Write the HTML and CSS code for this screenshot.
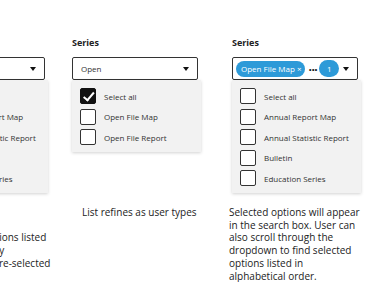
FILE: index.html
```html
<!DOCTYPE html>
<html lang="en">
<head>
    <meta charset="UTF-8">
    <title>Series filter states</title>
    <link rel="stylesheet" href="styles.css">
</head>
<body>
    <div class="board">
        <div class="col col_first">
            <div class="field">
                <div class="label">Series</div>
                <div class="select">
                    <span class="value"></span>
                    <span class="caret"></span>
                </div>
                <div class="menu">
                    <div class="option"><span class="check"></span>Select all</div>
                    <div class="option"><span class="check"></span>Annual Report Map</div>
                    <div class="option"><span class="check"></span>Annual Statistic Report</div>
                    <div class="option"><span class="check"></span>Bulletin</div>
                    <div class="option"><span class="check"></span>Education Series</div>
                </div>
            </div>
            <p class="note">Default state.<br>Most used<br>All unselected options listed<br>then alphabetically<br>come below the pre-selected</p>
        </div>

        <div class="col col_second">
            <div class="field">
                <div class="label">Series</div>
                <div class="select">
                    <span class="value">Open</span>
                    <span class="caret"></span>
                </div>
                <div class="menu">
                    <div class="option"><span class="check checked"></span>Select all</div>
                    <div class="option"><span class="check"></span>Open File Map</div>
                    <div class="option"><span class="check"></span>Open File Report</div>
                </div>
            </div>
            <p class="note note_center">List refines as user types</p>
        </div>

        <div class="col col_third">
            <div class="field">
                <div class="label">Series</div>
                <div class="select">
                    <span class="chip">Open File Map <span class="close">&times;</span></span>
                    <span class="more">...</span>
                    <span class="count">1</span>
                    <span class="caret"></span>
                </div>
                <div class="menu">
                    <div class="option"><span class="check"></span>Select all</div>
                    <div class="option"><span class="check"></span>Annual Report Map</div>
                    <div class="option"><span class="check"></span>Annual Statistic Report</div>
                    <div class="option"><span class="check"></span>Bulletin</div>
                    <div class="option"><span class="check"></span>Education Series</div>
                </div>
            </div>
            <p class="note">Selected options will appear<br>in the search box. User can<br>also scroll through the<br>dropdown to find selected<br>options listed in<br>alphabetical order.</p>
        </div>
    </div>
</body>
</html>
```

FILE: styles.css
```css
body {
    margin: 0;
    background: #fff;
    font-family: "Open Sans", "Liberation Sans", sans-serif;
    color: #333;
    overflow: hidden;
}
.board {
    display: flex;
    margin-left: -81px;
    padding-top: 37px;
}
.col {
    flex: none;
}
.col_first {
    width: 153px;
}
.col_second {
    width: 160px;
}
.col_third {
    width: 143px;
}
.field {
    height: 169px;
}
.label {
    font-size: 9px;
    font-weight: 700;
    line-height: 12px;
    color: #222;
    margin-bottom: 8px;
}
.select {
    display: flex;
    align-items: center;
    box-sizing: border-box;
    width: 126px;
    height: 23px;
    padding: 0 8px 0 8px;
    border: 1px solid #333;
    border-radius: 2px;
    background: #fff;
    font-size: 8px;
}
.value {
    flex: 1;
}
.caret {
    margin-left: auto;
    width: 0;
    height: 0;
    border-left: 3.5px solid transparent;
    border-right: 3.5px solid transparent;
    border-top: 4px solid #111;
}
.col_third .select {
    padding-left: 3px;
}
.chip {
    display: flex;
    align-items: center;
    height: 16px;
    padding: 0 4px 0 5px;
    border-radius: 8px;
    background: #2d9ad8;
    color: #fff;
    font-size: 8px;
    white-space: nowrap;
}
.close {
    margin-left: 2px;
    font-size: 8px;
}
.more {
    margin: 0 2px 0 3px;
    font-size: 12px;
    font-weight: 700;
    color: #111;
    line-height: 12px;
    padding-bottom: 4px;
    letter-spacing: -0.5px;
}
.count {
    display: flex;
    align-items: center;
    justify-content: center;
    width: 20px;
    height: 17px;
    border-radius: 9px;
    background: #2d9ad8;
    color: #fff;
    font-size: 8px;
}
.menu {
    box-sizing: border-box;
    width: 129px;
    padding: 8px 0 7px 0;
    background: #f2f2f2;
    box-shadow: 0 1px 3px rgba(0, 0, 0, 0.18);
    display: flex;
    flex-direction: column;
    gap: 4.5px;
}
.option {
    display: flex;
    align-items: center;
    gap: 8px;
    padding-left: 8px;
    height: 16px;
    font-size: 8px;
    white-space: nowrap;
}
.check {
    flex: none;
    box-sizing: border-box;
    width: 16px;
    height: 16px;
    border: 1.3px solid #333;
    border-radius: 2px;
    background: #fff;
}
.checked {
    position: relative;
    background: #111;
    border-color: #111;
}
.checked::after {
    content: "";
    position: absolute;
    left: 4.5px;
    top: 1px;
    width: 4px;
    height: 8.5px;
    border-right: 2px solid #fff;
    border-bottom: 2px solid #fff;
    transform: rotate(40deg);
}
.note {
    margin: 0 0 0 -3px;
    width: 140px;
    font-size: 10px;
    line-height: 12.7px;
    color: #222;
    white-space: nowrap;
}
.col_first .note {
    width: 150px;
}
.note_center {
    margin-left: 10px;
    width: 126px;
}
```
